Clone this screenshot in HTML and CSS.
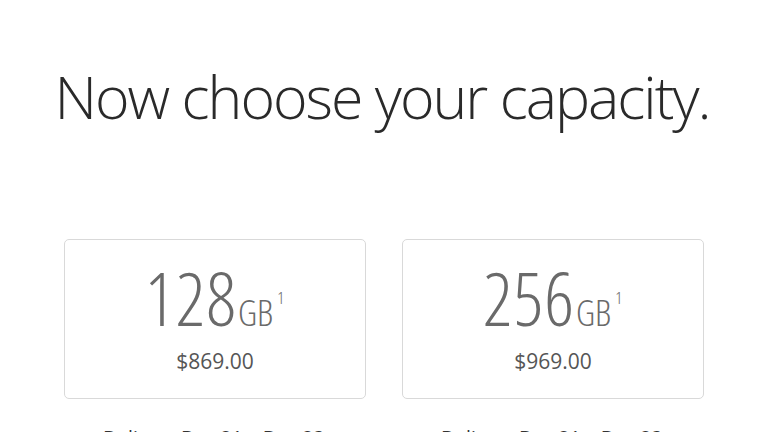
FILE: index.html
```html
<!DOCTYPE html>
<html>
  <head>
    <title>Choose your capacity</title>
    <link rel="stylesheet" href="styles.css">
    <meta name="viewport" content="width=device-width, initial-scale=1.0" />
  </head>
  <body>
    <h1 class="headline">Now choose your capacity.</h1>
    <div class="options">
      <div class="option">
        <div class="card">
          <div class="size">128<span class="unit">GB</span><sup class="note">1</sup></div>
          <div class="price">$869.00</div>
        </div>
        <div class="delivery">Delivers Dec 21 &ndash; Dec 23</div>
      </div>
      <div class="option">
        <div class="card">
          <div class="size">256<span class="unit">GB</span><sup class="note">1</sup></div>
          <div class="price">$969.00</div>
        </div>
        <div class="delivery">Delivers Dec 21 &ndash; Dec 23</div>
      </div>
    </div>
  </body>
</html>
```

FILE: styles.css
```css
body {
  margin: 0;
  background: #ffffff;
  font-family: "Open Sans", sans-serif;
  color: #333333;
}
.headline {
  margin: 0;
  padding-top: 56px;
  text-align: center;
  font-size: 59px;
  font-weight: 300;
  line-height: 80px;
  color: #2a2a2a;
  letter-spacing: -2px;
}
.options {
  display: flex;
  justify-content: center;
  gap: 36px;
  margin-top: 103px;
  padding-left: 4px;
}
.option {
  width: 302px;
}
.card {
  height: 160px;
  border: 1px solid #d9d9d9;
  border-radius: 5px;
  text-align: center;
  box-sizing: border-box;
  padding-top: 22px;
}
.size {
  font-size: 73px;
  font-weight: 300;
  font-stretch: 75%;
  line-height: 72px;
  color: #6a6a6a;
  letter-spacing: 1px;
}
.unit {
  font-size: 36px;
  letter-spacing: 0;
  margin-left: 1px;
}
.note {
  font-size: 17px;
  line-height: 0;
  vertical-align: 22px;
  margin-left: 4px;
}
.price {
  margin-top: -2px;
  font-size: 21px;
  color: #555555;
  line-height: 28px;
}
.delivery {
  margin-top: 27px;
  padding-left: 39px;
  font-size: 19.5px;
  line-height: 24px;
  color: #333333;
}
```
